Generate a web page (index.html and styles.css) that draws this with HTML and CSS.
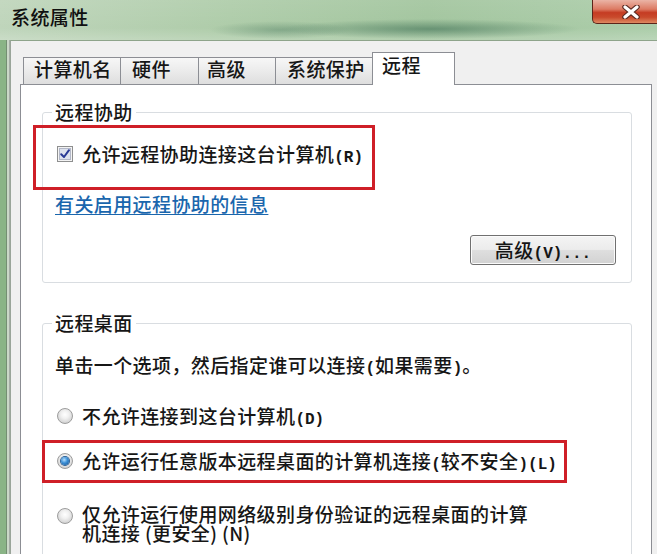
FILE: index.html
```html
<!DOCTYPE html>
<html lang="zh-CN">
<head>
<meta charset="utf-8">
<title>系统属性</title>
<link rel="stylesheet" href="styles.css">
</head>
<body>
<div class="window">
  <div class="titlebar">
    <span class="title">系统属性</span>
    <div class="close">
      <svg width="18" height="14" viewBox="0 0 18 14">
        <path d="M3 2 L15 12 M15 2 L3 12" stroke="#5b2a22" stroke-width="5.5" stroke-linecap="round" fill="none"/>
        <path d="M3 2 L15 12 M15 2 L3 12" stroke="#ffffff" stroke-width="3.2" stroke-linecap="round" fill="none"/>
      </svg>
    </div>
  </div>
  <div class="frame">
    <div class="client">
      <div class="tabs">
        <div class="tab t1">计算机名</div>
        <div class="tab t2">硬件</div>
        <div class="tab t3">高级</div>
        <div class="tab t4">系统保护</div>
        <div class="tab t5 active">远程</div>
      </div>
      <div class="panel">
        <fieldset class="group g1">
          <legend>远程协助</legend>
          <div class="mark mark-assist">
            <span class="checkbox">
              <svg width="16" height="16" viewBox="0 0 16 16">
                <rect x="0.5" y="0.5" width="15" height="15" fill="#f4f4f4" stroke="#8e8f8f"/>
                <rect x="2.5" y="2.5" width="11" height="11" fill="#dde2ee" stroke="#b3b8c8"/>
                <path d="M4.2 8.2 L7 11 L12 4.2" stroke="#283a96" stroke-width="2" fill="none" stroke-linecap="round" stroke-linejoin="round"/>
              </svg>
            </span>
            <span class="label">允许远程协助连接这台计算机<span class="k">(R)</span></span>
          </div>
          <a class="link" href="#">有关启用远程协助的信息</a>
          <div class="btn-row">
            <button class="btn" type="button">高级<span class="k">(V)...</span></button>
          </div>
        </fieldset>

        <fieldset class="group g2">
          <legend>远程桌面</legend>
          <p class="hint">单击一个选项，然后指定谁可以连接<span class="k">(</span>如果需要<span class="k">)</span>。</p>
          <div class="option o1">
            <span class="radio"></span>
            <span class="label">不允许连接到这台计算机<span class="k">(D)</span></span>
          </div>
          <div class="mark mark-rd">
            <div class="option o2">
              <span class="radio on"></span>
              <span class="label">允许运行任意版本远程桌面的计算机连接<span class="k">(</span>较不安全<span class="k">)(L)</span></span>
            </div>
          </div>
          <div class="option o3">
            <span class="radio"></span>
            <span class="label wrap">仅允许运行使用网络级别身份验证的远程桌面的计算机连接 (更安全) (N)</span>
          </div>
        </fieldset>
      </div>
    </div>
  </div>
</div>
</body>
</html>
```

FILE: styles.css
```css
html, body {
  margin: 0;
  padding: 0;
}

body {
  width: 657px;
  height: 554px;
  overflow: hidden;
  font-family: "Noto Sans CJK SC", "Noto Sans", sans-serif;
  font-size: 19px;
  font-weight: 500;
  letter-spacing: 0.4px;
  color: #161616;
}

.window {
  height: 554px;
  display: flex;
  flex-direction: column;
  background: #9cc298;
}

.titlebar {
  height: 40px;
  flex: none;
  display: flex;
  justify-content: space-between;
  align-items: flex-start;
  background:
    radial-gradient(ellipse 150px 10px at 430px 29px, rgba(55, 105, 80, 0.55), rgba(55, 105, 80, 0) 100%),
    radial-gradient(ellipse 70px 9px at 280px 30px, rgba(55, 105, 80, 0.35), rgba(55, 105, 80, 0) 100%),
    linear-gradient(180deg, rgba(255, 255, 255, 0.08) 0, rgba(255, 255, 255, 0) 70%, rgba(255, 255, 255, 0.18) 100%),
    linear-gradient(90deg, #bfd5bb 0%, #aecca9 35%, #a2c59e 65%, #accdaa 100%);
}

.title {
  margin-top: 5px;
  padding-left: 11px;
  line-height: 24px;
  color: #101010;
}

.close {
  width: 65px;
  height: 25px;
  box-sizing: border-box;
  margin-top: -1px;
  border: 1px solid #5c2419;
  border-right: none;
  border-radius: 0 0 0 5px;
  background: linear-gradient(180deg, #eab4a6 0%, #dc7a63 40%, #c53c23 55%, #c94a2c 75%, #de8a62 100%);
  display: flex;
  align-items: center;
  padding-left: 29px;
}

.close svg {
  display: block;
}

.frame {
  flex: 1;
  min-height: 0;
  display: flex;
  padding-left: 10px;
  background: linear-gradient(90deg, #8ab486 0, #8ab486 6px, #748f72 6px, #748f72 7px, #cbd8c8 7px, #cbd8c8 9px, #a6ada6 9px, #a6ada6 10px);
}

.client {
  flex: 1;
  min-width: 0;
  display: flex;
  flex-direction: column;
  background: #f0f0f0;
  border-top: 1px solid #8ea48b;
  border-left: 1px solid #9aa59a;
  padding-top: 11px;
}

.tabs {
  height: 32px;
  flex: none;
  display: flex;
  align-items: flex-end;
  margin-left: 12px;
}

.tab {
  height: 27px;
  box-sizing: border-box;
  border: 1px solid #8c8e94;
  border-bottom: none;
  margin-right: -1px;
  padding-left: 10px;
  line-height: 22px;
  background: linear-gradient(180deg, #f7f7f7 0%, #ebebeb 50%, #dedede 100%);
  white-space: nowrap;
}

.t1 { width: 98px; }
.t2 { width: 79px; padding-left: 11px; }
.t3 { width: 78px; padding-left: 8px; }
.t4 { width: 98px; padding-left: 11px; }
.t5 { width: 83px; padding-left: 9px; }

.tab.active {
  height: 33px;
  margin-bottom: -1px;
  padding-top: 1px;
  background: #ffffff;
  position: relative;
  z-index: 1;
}

.panel {
  flex: 1;
  min-height: 0;
  overflow: hidden;
  margin-left: 9px;
  width: 632px;
  box-sizing: border-box;
  border: 1px solid #8c8e94;
  border-bottom: none;
  background: #ffffff;
  padding: 15px 19px 0 21px;
}

.group {
  margin: 0;
  padding: 0;
  min-width: 0;
  border: 1px solid #d9dde1;
  border-radius: 3px;
}

.group legend {
  margin-left: 9px;
  padding: 0 3px;
  line-height: 24px;
}

.g2 {
  margin-top: 28px;
  height: 260px;
}

.mark {
  border: 3px solid #cf1f27;
  box-sizing: border-box;
}

.mark-assist {
  margin: 1px 0 0 -10px;
  width: 342px;
  height: 65px;
  display: flex;
  align-items: center;
  padding: 0 0 7px 21px;
}

.label {
  line-height: 24px;
}

.checkbox {
  width: 16px;
  height: 16px;
  flex: none;
  margin-right: 9px;
}

.checkbox svg {
  display: block;
}

.k {
  font-family: "Liberation Mono", "DejaVu Sans Mono", monospace;
  font-size: 16px;
  font-weight: 700;
  line-height: 14px;
  letter-spacing: 0;
}

.link {
  display: block;
  width: max-content;
  margin: 2px 0 0 12px;
  line-height: 24px;
  color: #1a66ad;
  text-decoration: underline;
  text-underline-offset: 2px;
}

.btn-row {
  display: flex;
  justify-content: flex-end;
  margin: 19px 15px 17px 0;
}

.btn {
  width: 146px;
  height: 30px;
  box-sizing: border-box;
  margin: 0;
  padding: 0;
  border: 1px solid #707070;
  border-radius: 3px;
  background: linear-gradient(180deg, #f4f4f4 0%, #ececec 48%, #dedede 52%, #d2d2d2 100%);
  box-shadow: inset 0 0 0 1px #fbfbfb;
  font: inherit;
  letter-spacing: 0.4px;
  line-height: 24px;
  color: #151515;
}

.hint {
  margin: 18px 0 0 12px;
  line-height: 24px;
}

.option {
  display: flex;
  align-items: center;
}

.o1 {
  margin: 27px 0 0 14px;
}

.mark-rd {
  margin: 12px 0 0 -1px;
  width: 525px;
  height: 43px;
  display: flex;
  align-items: center;
  padding: 0 0 2px 12px;
}

.o3 {
  margin: 21px 0 0 14px;
  align-items: flex-start;
}

.o3 .radio {
  margin-top: 4px;
}

.wrap {
  width: 455px;
  line-height: 19px;
}

.radio {
  width: 16px;
  height: 16px;
  flex: none;
  box-sizing: border-box;
  margin-right: 9px;
  border-radius: 50%;
  border: 1px solid #9c9c9c;
  background: radial-gradient(circle at 50% 40%, #ffffff 0%, #f1f1f1 35%, #d4d4d4 75%, #c4c4c4 100%);
  display: flex;
  align-items: center;
  justify-content: center;
}

.radio.on::after {
  content: "";
  width: 8px;
  height: 8px;
  border-radius: 50%;
  background: radial-gradient(circle at 40% 35%, #b6e0ff 0%, #3b8fd6 45%, #124f91 100%);
  box-shadow: 0 0 0 1px #2a5f96;
}
```
